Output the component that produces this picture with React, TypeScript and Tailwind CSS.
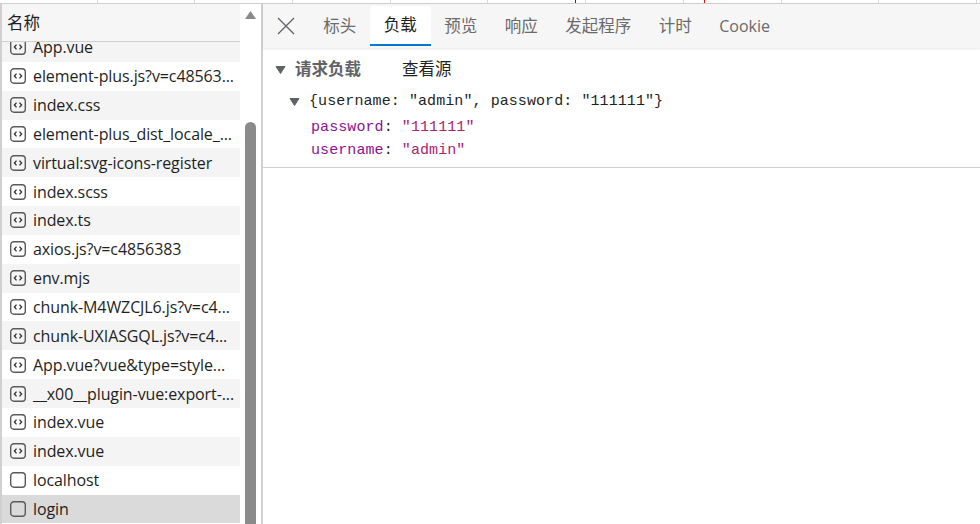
import React from 'react'

const uiFont = { fontFamily: '"Open Sans", "Noto Sans CJK SC", sans-serif' }

const files = [
  { name: 'App.vue', code: true },
  { name: 'element-plus.js?v=c48563...', code: true },
  { name: 'index.css', code: true },
  { name: 'element-plus_dist_locale_...', code: true },
  { name: 'virtual:svg-icons-register', code: true },
  { name: 'index.scss', code: true },
  { name: 'index.ts', code: true },
  { name: 'axios.js?v=c4856383', code: true },
  { name: 'env.mjs', code: true },
  { name: 'chunk-M4WZCJL6.js?v=c4...', code: true },
  { name: 'chunk-UXIASGQL.js?v=c4...', code: true },
  { name: 'App.vue?vue&type=style...', code: true },
  { name: '__x00__plugin-vue:export-...', code: true },
  { name: 'index.vue', code: true },
  { name: 'index.vue', code: true },
  { name: 'localhost', code: false },
  { name: 'login', code: false },
]

const tabs = ['标头', '负载', '预览', '响应', '发起程序', '计时', 'Cookie']

function FileIcon({ code }: { code: boolean }) {
  return (
    <svg width="16" height="16" viewBox="0 0 16 16" fill="none" className="shrink-0">
      <rect x="0.7" y="0.7" width="14.6" height="14.6" rx="3.2" stroke="#5a5a5a" strokeWidth="1.4" />
      {code && <path d="M6.5 5.6 4.4 8l2.1 2.4M9.5 5.6 11.6 8l-2.1 2.4" stroke="#2f2f2f" strokeWidth="1.3" />}
    </svg>
  )
}

function Caret({ className }: { className: string }) {
  return (
    <svg width="11" height="8" viewBox="0 0 11 8" className={className}>
      <path d="M1 .5h9L5.5 7.5z" fill="#5f6368" stroke="#5f6368" strokeLinejoin="round" />
    </svg>
  )
}

export default function App(): React.JSX.Element {
  return (
    <div className="flex flex-col w-[980px] h-[524px] overflow-hidden bg-white text-[#1f1f1f]" style={uiFont}>
      {/* 顶部时间轴 */}
      <div className="flex h-[4px] shrink-0 border-b border-[#cfcfcf]">
        {Array.from({ length: 10 }).map((_, i) => (
          <div key={i} className="w-[97.7px] h-full border-r border-[#d8d8d8] relative">
            {i === 5 && <div className="absolute left-[87px] top-0 h-full w-[1px] bg-[#2222cc]" />}
            {i === 7 && <div className="absolute left-[20px] top-0 h-full w-[1px] bg-[#e01010]" />}
          </div>
        ))}
      </div>

      <div className="flex flex-1 min-h-0">
        {/* 左列: 文件列表 */}
        <div className="w-[240px] shrink-0 flex flex-col border-l-2 border-[#d0d0d0]">
          <div className="h-[38px] shrink-0 flex items-center pl-[5px] pt-[1px] bg-[#f6f6f6] border-b border-[#cfcfcf] text-[16.5px]">
            名称
          </div>
          <div className="flex-1 min-h-0 overflow-hidden">
            <div className="-mt-[9px]">
              {files.map((f, i) => (
                <div
                  key={i}
                  className={`h-[28.85px] flex items-center pl-[8px] gap-[7px] text-[16px] tracking-[-0.1px] whitespace-nowrap ${
                    f.name === 'login' ? 'bg-[#dadada]' : i % 2 === 0 ? 'bg-[#f4f4f4]' : 'bg-white'
                  }`}
                >
                  <FileIcon code={f.code} />
                  <span>{f.name}</span>
                </div>
              ))}
            </div>
          </div>
        </div>

        {/* 滚动条 */}
        <div className="w-[23px] shrink-0 flex flex-col pl-[5px] border-r-2 border-[#d0d0d0]">
          <svg width="11" height="8" viewBox="0 0 11 8" className="mt-[7px]">
            <path d="M5.5 0l5.5 8H0z" fill="#8a8a8a" />
          </svg>
          <div className="mt-[103px] w-[11px] flex-1 rounded-t-[6px] bg-[#8a8a8a]" />
        </div>

        {/* 右列: 详细 */}
        <div className="flex-1 min-w-0 flex flex-col">
          <div className="h-[44px] shrink-0 flex items-stretch bg-[#f6f6f6] shadow-[0_1px_2px_rgba(0,0,0,0.1)]">
            <div className="w-[46.5px] flex items-center justify-center">
              <svg width="18" height="18" viewBox="0 0 18 18">
                <path d="M1 1l16 16M17 1L1 17" stroke="#5f6368" strokeWidth="1.3" />
              </svg>
            </div>
            {tabs.map((t) => (
              <div
                key={t}
                className={`flex items-center px-[13.75px] ${t === 'Cookie' ? 'text-[16px]' : 'text-[16.5px]'} ${
                  t === '负载'
                    ? 'bg-white text-[#1f1f1f] border-b-2 border-[#0078d4] rounded-t-[3px] mt-[2px] mb-[2px]'
                    : 'text-[#6a6a6a]'
                }`}
              >
                {t}
              </div>
            ))}
          </div>

          <div className="h-[120px] shrink-0 border-b border-[#cfcfcf]">
            <div className="flex items-center h-[37px] pl-[12px] pt-[6px]">
              <Caret className="mr-[9px]" />
              <span className="text-[16.5px] font-bold text-[#5f6368] w-[107px]">请求负载</span>
              <span className="text-[16.5px]">查看源</span>
            </div>
            <div
              className="text-[15px] tracking-[0.08px] leading-[23px] pl-[48px] whitespace-pre"
              style={{ fontFamily: '"Liberation Mono", monospace' }}
            >
              <div className="flex items-center -ml-[22px] h-[27px] mt-[3px] mb-[1px]">
                <Caret className="mr-[9px]" />
                <span>{'{username: "admin", password: "111111"}'}</span>
              </div>
              <div className="text-[#881391]">
                password<span className="text-[#1f1f1f]">: </span>
                <span className="text-[#a8246e]">"111111"</span>
              </div>
              <div className="text-[#881391]">
                username<span className="text-[#1f1f1f]">: </span>
                <span className="text-[#a8246e]">"admin"</span>
              </div>
            </div>
          </div>
        </div>
      </div>
    </div>
  )
}
